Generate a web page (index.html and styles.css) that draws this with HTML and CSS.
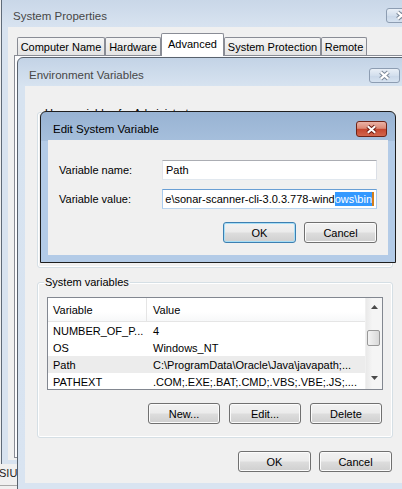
FILE: index.html
```html
<!DOCTYPE html>
<html>
<head>
<meta charset="utf-8">
<link rel="stylesheet" href="styles.css">
</head>
<body>
<section class="win sp">
  <header class="tbar">
    <span class="ttl">System Properties</span>
    <span class="cbtn idle"><svg width="30" height="15" viewBox="0 0 30 15"><path d="M11 4 L19 11 M19 4 L11 11" stroke="#7d8a9a" stroke-width="4.4" fill="none"/><path d="M11 4 L19 11 M19 4 L11 11" stroke="#fff" stroke-width="2.2" fill="none"/></svg></span>
  </header>
  <div class="client">
    <div class="tabs">
      <div class="tab w-cn">Computer Name</div>
      <div class="tab w-hw">Hardware</div>
      <div class="tab sel w-adv">Advanced</div>
      <div class="tab w-sp">System Protection</div>
      <div class="tab w-rm">Remote</div>
    </div>
    <div class="panel"></div>
  </div>
</section>

<div class="under">SIU</div>

<section class="win ev">
  <header class="tbar">
    <span class="ttl">Environment Variables</span>
    <span class="cbtn idle"><svg width="30" height="15" viewBox="0 0 30 15"><path d="M11 4 L19 11 M19 4 L11 11" stroke="#7d8a9a" stroke-width="4.4" fill="none"/><path d="M11 4 L19 11 M19 4 L11 11" stroke="#fff" stroke-width="2.2" fill="none"/></svg></span>
  </header>
  <div class="client">
    <div class="group user">
      <span class="glabel">User variables for Administrator</span>
    </div>
    <div class="group sys">
      <span class="glabel">System variables</span>
      <div class="list">
        <div class="cols">
          <div class="hdr"><div class="c1">Variable</div><div class="c2">Value</div></div>
          <div class="lrow"><div class="c1">NUMBER_OF_P...</div><div class="c2">4</div></div>
          <div class="lrow"><div class="c1">OS</div><div class="c2">Windows_NT</div></div>
          <div class="lrow selrow"><div class="c1">Path</div><div class="c2">C:\ProgramData\Oracle\Java\javapath;...</div></div>
          <div class="lrow"><div class="c1">PATHEXT</div><div class="c2">.COM;.EXE;.BAT;.CMD;.VBS;.VBE;.JS;....</div></div>
        </div>
        <div class="vscroll">
          <div class="sbtn"><svg width="7" height="4" viewBox="0 0 7 4"><polygon points="0,4 7,4 3.5,0" fill="#4a4a4a"/></svg></div>
          <div class="thumb"></div>
          <div class="sbtn down"><svg width="7" height="4" viewBox="0 0 7 4"><polygon points="0,0 7,0 3.5,4" fill="#4a4a4a"/></svg></div>
        </div>
      </div>
      <div class="btnrow inner">
        <div class="btn">New...</div>
        <div class="btn">Edit...</div>
        <div class="btn">Delete</div>
      </div>
    </div>
    <div class="btnrow main">
      <div class="btn">OK</div>
      <div class="btn">Cancel</div>
    </div>
  </div>
</section>

<section class="win dlg">
  <header class="tbar">
    <span class="ttl">Edit System Variable</span>
    <span class="cbtn red"><svg width="31" height="15" viewBox="0 0 31 15"><path d="M11.5 4 L19.5 11 M19.5 4 L11.5 11" stroke="#6e1d12" stroke-width="4.4" fill="none"/><path d="M11.5 4 L19.5 11 M19.5 4 L11.5 11" stroke="#fff" stroke-width="2.2" fill="none"/></svg></span>
  </header>
  <div class="client">
    <div class="frow">
      <span class="flabel">Variable name:</span>
      <div class="tb">Path</div>
    </div>
    <div class="frow second">
      <span class="flabel">Variable value:</span>
      <div class="tb focus"><span class="txt">e\sonar-scanner-cli-3.0.3.778-wind</span><span class="seltext">ows\bin</span><span class="caret"></span></div>
    </div>
    <div class="btnrow dbtns">
      <div class="btn def">OK</div>
      <div class="btn">Cancel</div>
    </div>
  </div>
</section>
</body>
</html>
```

FILE: styles.css
```css
* { box-sizing: border-box; }
html, body { margin: 0; width: 402px; height: 489px; overflow: hidden; }
body {
  position: relative;
  background: #f0f0f0;
  font: 11px "Liberation Sans", Arial, sans-serif;
  color: #000;
}

.win { position: absolute; display: flex; flex-direction: column; }
.tbar { display: flex; align-items: center; justify-content: space-between; flex-shrink: 0; }
.ttl { font-size: 11.5px; color: #474747; white-space: nowrap; }
.client { background: #f0f0f0; flex: 1; }

/* close buttons */
.cbtn { display: flex; align-items: center; justify-content: center; border-radius: 3px; }
.cbtn svg { display: block; }
.cbtn.idle {
  width: 31px; height: 15px;
  border: 1px solid #8d9db2;
  background: linear-gradient(#e9eff7, #d3dfed 50%, #c9d7e8 51%, #d6e2f0);
}
.cbtn.red {
  width: 31px; height: 16px;
  border: 1px solid #6f2417;
  background: linear-gradient(#eab3a6, #dc8a76 45%, #c5472f 52%, #d2664d);
}

/* System Properties */
.sp {
  left: 1px; top: 0; width: 430px; height: 464px;
  border-left: 1px solid #5f6b79;
  background: linear-gradient(#c9d7e8, #d8e3f0 27px, #d8e3f0);
  padding: 0 0 4px 6px;
}
.sp .tbar { height: 27px; padding: 4px 14px 0 5px; }
.sp .client { display: flex; flex-direction: column; padding: 6px 0 2px 6px; }
.tabs { display: flex; align-items: flex-end; height: 22px; margin-left: 3px; position: relative; z-index: 1; }
.tab {
  height: 18px; flex-shrink: 0;
  border: 1px solid #898c95; border-bottom: none;
  border-radius: 2px 2px 0 0;
  background: linear-gradient(#f5f5f5, #e4e4e4);
  display: flex; align-items: center; justify-content: center;
  white-space: nowrap; padding-top: 1px;
}
.tab.sel { height: 23px; margin-bottom: -1px; background: #fff; padding-top: 0; padding-bottom: 2px; }
.w-cn { width: 88px; }
.w-hw { width: 56px; }
.w-adv { width: 63px; }
.w-sp { width: 97px; }
.w-rm { width: 46px; }
.panel { flex: 1; border: 1px solid #898c95; background: #fcfcfe; }

.under {
  position: absolute; left: -1px; top: 464px; width: 18px; height: 22px;
  padding-top: 3px; border-bottom: 1px solid #a9a9a9; overflow: hidden;
  white-space: nowrap; color: #222;
}

/* Environment Variables */
.ev {
  left: 17px; top: 57px; width: 394px; height: 433px;
  border: 1px solid #59626d;
  border-radius: 6px 6px 0 0;
  background: linear-gradient(#c3d3e6, #d7e3f0 28px, #d9e4f1);
  padding: 0 7px 6px 7px;
}
.ev .tbar { height: 28px; padding: 6px 3px 0 4px; }
.ev .client { padding-left: 12px; display: flex; flex-direction: column; }

.group {
  width: 356px; height: 156px;
  border: 1px solid #d5dfe5; border-radius: 3px;
  box-shadow: inset 0 0 0 1px #fff;
  display: flex; flex-direction: column;
}
.group.user { margin-top: 26px; }
.group.user .glabel { margin-top: -6px; }
.group.sys { margin-top: 14px; }
.glabel {
  display: block; width: fit-content; height: 13px; line-height: 13px;
  margin: -7px 0 0 6px; padding: 0 1px; background: #f0f0f0; white-space: nowrap;
}

.list {
  margin: 8px 0 0 9px; width: 336px; height: 93px;
  border: 1px solid #828790; background: #fff;
  display: flex; overflow: hidden; flex-shrink: 0;
}
.cols { width: 317px; display: flex; flex-direction: column; }
.hdr { height: 24px; flex-shrink: 0; display: flex; align-items: stretch; border-bottom: 1px solid #e5e5e5; background: linear-gradient(#fff 60%, #f7f8f9); }
.hdr .c1 { border-right: 1px solid #e5e5e5; }
.hdr > div, .lrow > div { display: flex; align-items: center; white-space: nowrap; overflow: hidden; }
.lrow { height: 17px; flex-shrink: 0; display: flex; }
.c1 { width: 99px; padding-left: 5px; flex-shrink: 0; }
.c2 { flex: 1; padding-left: 6px; }
.selrow { background: #ececec; }

.vscroll {
  width: 17px; display: flex; flex-direction: column;
  background: linear-gradient(to right, #e9e9e9, #f5f5f5 40%, #f5f5f5);
  border-left: 1px solid #f0f0f0;
}
.sbtn { height: 17px; display: flex; align-items: center; justify-content: center; flex-shrink: 0; }
.sbtn svg { display: block; }
.sbtn.down { margin-top: auto; height: 19px; align-items: flex-start; padding-top: 6px; }
.thumb {
  margin: 15px 2px 0 1px; height: 16px;
  border: 1px solid #989898; border-radius: 2px;
  background: linear-gradient(to right, #f3f3f3, #e6e6e6 50%, #d8d8d8);
}

.btnrow { display: flex; justify-content: flex-end; gap: 9px; }
.btnrow.inner { margin-top: 13px; padding-right: 10px; }
.btnrow.main { margin-top: 13px; width: 356px; padding-right: 1px; gap: 8px; }
.btn {
  width: 72px; height: 21px;
  border: 1px solid #707070; border-radius: 3px;
  background: linear-gradient(#f2f2f2, #ebebeb 48%, #dddddd 52%, #cfcfcf);
  box-shadow: inset 0 0 0 1px #fbfbfb;
  display: flex; align-items: center; justify-content: center;
  white-space: nowrap; flex-shrink: 0;
}
.btnrow.main .btn { width: 73px; }

/* Edit System Variable */
.dlg {
  left: 40px; top: 111px; width: 356px; height: 152px;
  border: 1px solid #1e1e1e;
  border-radius: 6px 6px 0 0;
  background: linear-gradient(#98b3d3, #a6bfdc 29px, #b3cbe7 29px, #b3cbe7);
  padding: 0 7px 7px 7px;
}
.dlg .tbar { height: 28px; padding: 6px 1px 0 5px; }
.dlg .ttl { color: #000; }
.dlg .client { padding: 20px 11px 0 11px; }
.frow { display: flex; align-items: center; height: 20px; }
.frow.second { margin-top: 9px; }
.flabel { width: 103px; flex-shrink: 0; white-space: nowrap; }
.tb {
  width: 217px; height: 20px;
  border: 1px solid; border-color: #abadb3 #dbdfe6 #e3e9ef #e2e3ea;
  background: #fff; padding: 0 3px;
  display: flex; align-items: center; overflow: hidden; white-space: nowrap;
}
.tb.focus { border-color: #6a9fd4 #a9cbee #b9d5f0 #a9cbee; justify-content: flex-end; padding: 0 2px 0 1px; }
.tb > span { flex-shrink: 0; }
.seltext { background: #3399ff; color: #fff; height: 14px; line-height: 14px; }
.caret { width: 2px; height: 14px; background: #d17f1d; }
.btnrow.dbtns { margin-top: 13px; gap: 8px; }
.dbtns .btn { width: 73px; }
.btn.def { border-color: #3c7fb1; box-shadow: inset 0 0 0 1px #a7def6; }
```
